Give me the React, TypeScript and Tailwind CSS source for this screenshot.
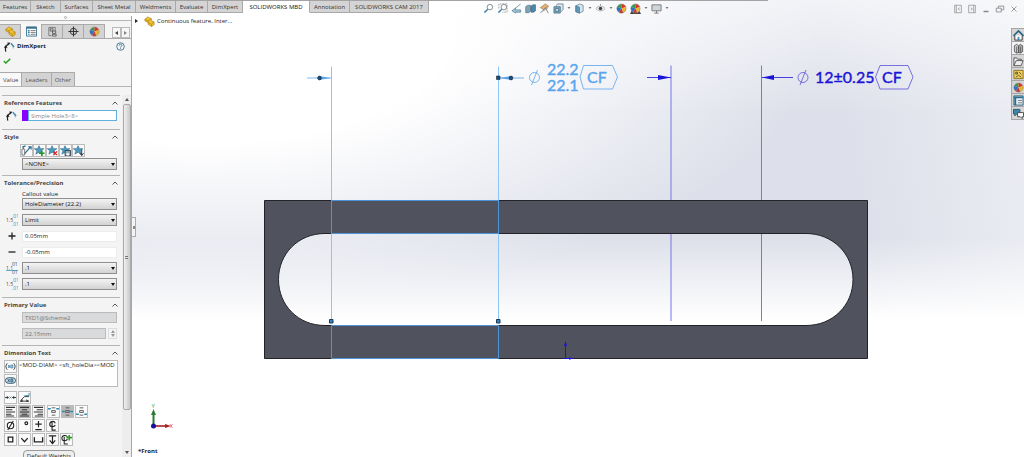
import { useState, type ReactNode } from 'react'
import { clsx } from 'clsx'

type IconProps = { children: ReactNode; className?: string }

function Icon({ children, className = 'size-[11px]' }: IconProps) {
  return (
    <svg viewBox="0 0 12 12" className={clsx('shrink-0', className)} fill="none" stroke="#555" strokeWidth="1" aria-hidden="true">
      {children}
    </svg>
  )
}

/* ---------- shared glyphs ---------- */

const PartGlyph = () => (
  <g stroke="#a87a10" strokeWidth=".7" strokeLinejoin="round">
    <path d="M1 3.5 4 1l4 2v2l3 1.5v3L8 11.5 4.5 9V7L1 5.5Z" fill="#f4c430" />
    <path d="M1 3.5 4.5 5.2 8 3M4.5 5.2V7L8 9l3-2.5M8 9v2.5" />
  </g>
)

const Ball = () => (
  <g stroke="none">
    <circle cx="6" cy="6" r="5" fill="#eee" />
    <path d="M6 6V1a5 5 0 0 0-4.6 3Z" fill="#3b9a3f" />
    <path d="M6 6V1a5 5 0 0 1 4.7 3.3Z" fill="#d8342c" />
    <path d="M6 6 10.7 4.3A5 5 0 0 1 8 10.6Z" fill="#e7b92e" />
    <path d="M6 6 1.4 4A5 5 0 0 0 3 10Z" fill="#2f6fc4" />
    <path d="M6 6 8 10.6A5 5 0 0 1 3 10Z" fill="#c33a36" />
    <circle cx="6" cy="6" r="5" stroke="#777" strokeWidth=".5" />
  </g>
)

const DimXpertGlyph = () => (
  <>
    <path d="M2 11.500C1 8 2 5 4.500 3.500" stroke="#222" strokeWidth="1.300" />
    <path d="m0 7.500 1.500-3L4 7ZM3.500 1.500 7 2 5 5Z" fill="#222" stroke="none" />
    <path d="M7.500 2.500 11 6.500" stroke="#3d8fb5" strokeWidth="1.600" />
    <path d="M10 5v4" stroke="#3d8fb5" strokeDasharray="1 1" />
  </>
)

const StarGlyph = () => (
  <path d="M5.500.800 7 4h3.800L7.800 6.300 9 10 5.500 7.800 2 10l1.200-3.700L.300 4H4Z" fill="#4d9cc0" stroke="#24617f" strokeWidth=".6" />
)

const Lens = ({ color = '#7d8791' }) => (
  <>
    <circle cx="7.500" cy="4.500" r="3" stroke={color} />
    <path d="M5.200 6.800 1.500 10.500" stroke="#4b86ad" strokeWidth="1.600" />
  </>
)

/* ---------- ribbon ---------- */

const TABS = [
  { label: 'Features', width: 'w-[31px]' },
  { label: 'Sketch', width: 'w-[30px]' },
  { label: 'Surfaces', width: 'w-[32px]' },
  { label: 'Sheet Metal', width: 'w-[43px]' },
  { label: 'Weldments', width: 'w-[40px]' },
  { label: 'Evaluate', width: 'w-[32px]' },
  { label: 'DimXpert', width: 'w-[35px]' },
  { label: 'SOLIDWORKS MBD', width: 'w-[67px]' },
  { label: 'Annotation', width: 'w-[40px]' },
  { label: 'SOLIDWORKS CAM 2017', width: 'w-[79px]' },
]

const VIEW_TOOLS: { name: string; menu?: boolean; art: ReactNode }[] = [
  { name: 'Zoom to fit', art: <Lens /> },
  { name: 'Zoom to area', art: <><Lens /><path d="M2 6V1h9v9H6" stroke="#888" strokeDasharray="2 1" strokeWidth=".8" /></> },
  { name: 'Previous view', art: <path d="M10.500 1 4.500 6M1 8.500 5 5.500v2h5.500V10H5v1Z" fill="#9fc4d6" stroke="#55809a" strokeWidth=".8" /> },
  {
    name: 'Section view',
    art: (
      <g stroke="#48697c" strokeWidth=".7">
        <path d="M.8 4 3 2.500h3V9L4 10.500H.8Z" fill="#7da6bb" />
        <path d="M6.500 3.500 8.500 2h3v6.500L9.500 10h-3Z" fill="#4b86ad" />
      </g>
    ),
  },
  {
    name: 'Dynamic annotation views',
    art: (
      <>
        <path d="M1.500 5 7 1l3.500 2.500L5 7Z" fill="#e3b27a" stroke="#9c7040" strokeWidth=".7" />
        <path d="M1.500 11 7 5l3 6M4 9l6-4" stroke="#888" />
      </>
    ),
  },
  {
    name: 'View orientation',
    menu: true,
    art: (
      <g stroke="#4f7285" strokeWidth=".8">
        <path d="M3 3.500 5 1h6v6L9 9.500" fill="#e2e8ec" />
        <path d="M1 4h7v7H1Z" fill="#6fa3bb" />
        <path d="M3 6h3v3H3Z" fill="#d7e6ee" />
      </g>
    ),
  },
  {
    name: 'Display style',
    menu: true,
    art: (
      <g stroke="#4f7285" strokeWidth=".7" strokeLinejoin="round">
        <path d="M2 3 6.500 1 10 2.500v6.500L6 11 2 9.500Z" fill="#d9e6ee" />
        <path d="M2 3l4 1.500V11L2 9.500Z" fill="#5b9abc" />
      </g>
    ),
  },
  {
    name: 'Hide or show items',
    menu: true,
    art: (
      <>
        <path d="M1 6c3-3.500 7-3.500 10 0-3 3.500-7 3.500-10 0Z" stroke="#999" strokeWidth=".8" />
        <circle cx="6" cy="6" r="2" fill="#444" stroke="none" />
        <path d="M6 1v2" stroke="#999" />
      </>
    ),
  },
  { name: 'Edit appearance', art: <Ball /> },
  { name: 'Apply scene', menu: true, art: <><path d="M0 12 2 8h8l2 4Z" fill="#444" stroke="none" /><Ball /></> },
  {
    name: 'View settings',
    menu: true,
    art: (
      <>
        <path d="M1 2h10v6.500H1Z" fill="#cfd6db" stroke="#777" />
        <path d="M6 8.500V11M3.500 11h5" stroke="#777" />
      </>
    ),
  },
]

function Header() {
  const [active, setActive] = useState('SOLIDWORKS MBD')
  return (
    <header className="h-4 shrink-0">
      <div className="h-px w-3/4 bg-[#a3a3a3]" />
      <div className="flex items-start">
        <nav className="flex h-3 shrink-0">
          {TABS.map(tab => (
            <button
              key={tab.label}
              onClick={() => setActive(tab.label)}
              className={clsx(
                'shrink-0 whitespace-nowrap border-b border-r border-[#a9a9a9] text-center',
                tab.width,
                active === tab.label ? 'border-b-transparent bg-white/60 text-[#111]' : 'bg-[#d4d4d4] text-[#333]'
              )}
            >
              {tab.label}
            </button>
          ))}
        </nav>
        <div className="ml-[54px] mt-0.5 flex shrink-0 gap-[3px]">
          {VIEW_TOOLS.map(tool => (
            <button key={tool.name} aria-label={tool.name} className="flex items-center gap-[3px]">
              <Icon>{tool.art}</Icon>
              {tool.menu && (
                <svg viewBox="0 0 4 3" className="h-[3px] w-1" aria-hidden="true">
                  <path d="M.5 0h3L2 2Z" fill="#777" />
                </svg>
              )}
            </button>
          ))}
        </div>
        <div className="ml-auto mr-[5px] mt-[3px] flex gap-1">
          <button aria-label="Collapse left"><Icon className="size-[10px]"><path d="M2 1.500h8v9H2ZM4 1.500v9M8 4.500 6 6l2 1.500" stroke="#999" /></Icon></button>
          <button aria-label="Collapse right"><Icon className="size-[10px]"><path d="M2 1.500h8v9H2ZM8 1.500v9M4.500 4.500l2 1.500-2 1.500" stroke="#999" /></Icon></button>
          <button aria-label="Minimize"><Icon className="size-[10px]"><path d="M3 9h6" stroke="#888" strokeWidth="1.800" /></Icon></button>
          <button aria-label="Restore"><Icon className="size-[10px]"><path d="M1.500 5h6v4.500h-6ZM4 5V2.500h6.500V7h-3" stroke="#888" /></Icon></button>
          <button aria-label="Close"><Icon className="size-[10px]"><path d="m3 3 6 6M9 3 3 9" stroke="#888" /></Icon></button>
        </div>
      </div>
    </header>
  )
}

/* ---------- property panel ---------- */

function Section({ title, className, children }: { title: string; className?: string; children: ReactNode }) {
  return (
    <section className={clsx('border-t border-[#b5b5b5] px-0.5', className)}>
      <h2 className="flex h-[14px] items-center justify-between font-bold text-[#444]">
        {title}
        <svg viewBox="0 0 6 4" className="h-1 w-[6px]" fill="none" stroke="#555" aria-hidden="true">
          <path d="M.5 3.500 3 1l2.500 2.500" />
        </svg>
      </h2>
      {children}
    </section>
  )
}

function Row({ icon, children }: { icon?: ReactNode; children: ReactNode }) {
  return (
    <div className="flex items-center">
      <div className="flex w-[18px] shrink-0 pl-0.5">{icon}</div>
      <div className="mr-px flex min-w-0 flex-1">{children}</div>
    </div>
  )
}

function Select({ label, value }: { label: string; value: string }) {
  return (
    <div className="relative w-full">
      <select
        aria-label={label}
        defaultValue={value}
        className="block h-3 w-full appearance-none border border-[#8f8f8f] bg-linear-to-b from-[#f4f4f4] to-[#d2d2d2] px-0.5 text-[#111]"
      >
        <option>{value}</option>
      </select>
      <svg viewBox="0 0 4 3" className="pointer-events-none absolute right-0.5 top-[5px] h-[3px] w-1" aria-hidden="true">
        <path d="M0 0h4L2 3Z" fill="#111" />
      </svg>
    </div>
  )
}

function ToolButton({ name, on, children }: { name: string; on?: boolean; children: ReactNode }) {
  return (
    <button
      aria-label={name}
      className={clsx('flex size-[13px] shrink-0 items-center justify-center border border-[#bcbcbc]', on ? 'bg-[#b9b9b9]' : 'bg-[#fafafa]')}
    >
      <Icon>{children}</Icon>
    </button>
  )
}

// stacked tolerance numerals: nominal at left, limits above and below
function ToleranceIcon({ nominal, limit, mid }: { nominal: string; limit: string; mid?: boolean }) {
  return (
    <svg viewBox="0 0 12 12" className="size-3" aria-hidden="true" fontSize="5" fontFamily="Open Sans, sans-serif">
      <text x="0" y="8" fill="#444">{nominal}</text>
      <text x="6" y="4" fill={mid ? '#444' : '#2f8aad'}>{limit}</text>
      <text x="6" y="12" fill={mid ? '#444' : '#2f8aad'}>{limit}</text>
      {mid && <path d="M0 8.500h12" stroke="#2f8aad" strokeWidth=".7" />}
    </svg>
  )
}

const PANEL_TABS: { name: string; art: ReactNode }[] = [
  { name: 'Feature tree', art: <PartGlyph /> },
  {
    name: 'Properties',
    art: (
      <>
        <path d="M.5 1h11v10H.5Z" fill="#fff" stroke="#39718f" />
        <path d="M.5 2h11" stroke="#39718f" strokeWidth="2" />
        <path d="M2 5h2M2 7h2M2 9h2" stroke="#2f7fa8" strokeWidth="1.200" />
        <path d="M5 5h5.500M5 7h5.500M5 9h5.500" stroke="#555" strokeWidth=".8" />
      </>
    ),
  },
  {
    name: 'Configurations',
    art: (
      <>
        <path d="M2 1.500h7v4M2 1.500v9h3" stroke="#777" />
        <path d="M3.500 3h3v2.500h-3ZM6 5.500h3.500V8H6ZM6 9h4v2H6Z" stroke="#444" fill="#ddd" strokeWidth=".8" />
      </>
    ),
  },
  {
    name: 'DimXpert manager',
    art: <><circle cx="6" cy="6" r="3.500" stroke="#333" /><path d="M6 .5v11M.5 6h11" stroke="#333" strokeWidth="1.200" /></>,
  },
  { name: 'Appearances', art: <Ball /> },
]

const STYLE_BUTTONS: { name: string; art: ReactNode }[] = [
  { name: 'Apply default', art: <><path d="M1 4.500h3V11H1Z" stroke="#777" /><path d="M4 9.500 10.500 2M3 4 2 2l3-1M8 2h3v3" stroke="#286d90" strokeWidth="1.300" /></> },
  { name: 'Add style', art: <><StarGlyph /><path d="M8.500 6v6M5.500 9h6" stroke="#1f9a1f" strokeWidth="1.800" /></> },
  { name: 'Delete style', art: <><StarGlyph /><path d="m7 7 4 4M11 7l-4 4" stroke="#d22" strokeWidth="1.400" /></> },
  { name: 'Save style', art: <><StarGlyph /><path d="M5.500 6h6v5.500h-6Z" fill="#8aa9b9" stroke="#345" /><path d="M7 9h3v2.500H7Z" fill="#fff" stroke="none" /></> },
  { name: 'Load style', art: <><StarGlyph /><path d="M9.500 5v6M7.500 9l2 2.500 2-2.500" stroke="#222" /></> },
]

const lines = (d: string) => <path d={d} stroke="#333" strokeWidth="1.100" />

const TEXT_TOOLS: { name: string; on?: boolean; gap?: boolean; art: ReactNode }[][] = [
  [
    { name: 'Center dimension', art: <><path d="M0 6h4M8 6h4" stroke="#333" /><path d="m2 4 2 2-2 2M10 4 8 6l2 2" fill="#333" stroke="none" /><path d="m5 5 2 2M7 5 5 7" stroke="#2f8aad" /></> },
    { name: 'Offset text', art: <><path d="M1 10h10M2 9 6 5h5" stroke="#333" /><path d="M6 4h5V1" stroke="#2f8aad" /><path d="m1 10 3-2v3ZM11 10 8 8v3Z" fill="#333" stroke="none" /></> },
  ],
  [
    { name: 'Align left', art: lines('M1 1.500h10M1 4h7M1 6.500h10M1 9h6M1 11h9') },
    { name: 'Align center', on: true, art: lines('M1 1.500h10M3 4h6M1 6.500h10M3 9h6M1 11h10') },
    { name: 'Align right', art: lines('M1 1.500h10M4 4h7M1 6.500h10M5 9h6M2 11h9') },
    { name: 'Top justify', gap: true, art: <><path d="M4 2h4M4 5h4v2H4ZM4 10h4" stroke="#555" /><path d="M0 3h3M9 3h3" stroke="#2f8aad" strokeWidth="1.500" /></> },
    { name: 'Middle justify', on: true, art: <><path d="M4 2h4M4 5h4v2H4ZM4 10h4" stroke="#555" /><path d="M0 6h3M9 6h3" stroke="#2f8aad" strokeWidth="1.500" /></> },
    { name: 'Bottom justify', art: <><path d="M4 2h4M4 5h4v2H4ZM4 10h4" stroke="#555" /><path d="M0 9h3M9 9h3" stroke="#2f8aad" strokeWidth="1.500" /></> },
  ],
  [
    { name: 'Diameter', art: <><circle cx="6" cy="6" r="3.500" stroke="#222" strokeWidth="1.200" /><path d="M3 11 9 1" stroke="#222" strokeWidth="1.200" /></> },
    { name: 'Degree', art: <circle cx="8" cy="3.500" r="1.500" stroke="#222" strokeWidth="1.200" /> },
    { name: 'Plus or minus', art: <path d="M6 1v7M2.500 4.500h7M2.500 10.500h7" stroke="#222" strokeWidth="1.300" /> },
    { name: 'Centerline', art: <path d="M9 3.500C8 .500 3 1 3 4.500S8 8 9 5.500M5.500 2v9h4" stroke="#222" strokeWidth="1.200" /> },
  ],
  [
    { name: 'Square', art: <path d="M3.500 3.500h5v5h-5Z" stroke="#222" strokeWidth="1.400" /> },
    { name: 'Countersink', art: <path d="m2.500 4.500 3.500 4 3.500-4" stroke="#222" strokeWidth="1.400" /> },
    { name: 'Counterbore', art: <path d="M1.500 3.500v5h9v-5" stroke="#222" strokeWidth="1.400" /> },
    { name: 'Depth', art: <path d="M2 2h8M6 2v8M3 7l3 3.500L9 7" stroke="#222" strokeWidth="1.300" /> },
    { name: 'More symbols', art: <><path d="M7 3.500C6 .500 1 1 1 4.500S6 8 7 5.500M3.500 3v8h4" stroke="#222" strokeWidth="1.100" /><path d="M9 1v6M6 4h6" stroke="#2ca01c" strokeWidth="1.800" /></> },
  ],
]

const inputBox = 'block h-[11px] w-full min-w-0 border px-0.5 outline-none'

function PropertyPanel() {
  const [page, setPage] = useState('Value')
  return (
    <aside className="flex w-[132px] shrink-0 flex-col border-r border-[#a8a8a8] bg-[#f4f4f4]">
      <div className="flex h-[5px] shrink-0 justify-center border-b border-[#b5b5b5] bg-[#fafafa]">
        <span className="size-[3px] rounded-full border border-[#aaa]" />
      </div>
      <div className="mt-[3px] flex h-[15px] shrink-0">
        {PANEL_TABS.map((tab, i) => (
          <button
            key={tab.name}
            aria-label={tab.name}
            className={clsx(
              'flex w-[21px] items-center justify-center border-r border-[#aaa]',
              i === 1 ? 'bg-[#f8f8f8]' : 'border-b border-t bg-[#d3d3d3]'
            )}
          >
            <Icon>{tab.art}</Icon>
          </button>
        ))}
        <div className="flex flex-1 items-end justify-end border-b border-[#aaa] pr-px">
          <button aria-label="Previous tabs" className="flex h-[11px] w-[9px] items-center justify-center border border-[#bbb] bg-[#f6f6f6]">
            <svg viewBox="0 0 3 4" className="h-1 w-[3px]" aria-hidden="true"><path d="M3 0v4L0 2Z" fill="#444" /></svg>
          </button>
          <button aria-label="Next tabs" className="flex h-[11px] w-[9px] items-center justify-center border border-[#bbb] bg-[#f6f6f6]">
            <svg viewBox="0 0 3 4" className="h-1 w-[3px]" aria-hidden="true"><path d="M0 0v4l3-2Z" fill="#888" /></svg>
          </button>
        </div>
      </div>

      <div className="flex h-[14px] shrink-0 items-center gap-0.5 pl-1 pr-[6px]">
        <Icon><DimXpertGlyph /></Icon>
        <h1 className="flex-1 font-bold text-[#222]">DimXpert</h1>
        <button aria-label="Help">
          <svg viewBox="0 0 10 10" className="size-[9px]" fill="none" stroke="#3b6f8d" aria-hidden="true">
            <circle cx="5" cy="5" r="4.200" />
            <path d="M3.500 4c0-2 3-2 3-.2C6.500 5 5 5 5 6.200M5 7v1" />
          </svg>
        </button>
      </div>
      <button aria-label="OK" className="flex h-[15px] shrink-0 items-center pl-[3px]">
        <svg viewBox="0 0 8 6" className="h-[6px] w-2" fill="none" stroke="#35a02c" strokeWidth="1.600" aria-hidden="true">
          <path d="m.800 3 2 2L7.200.800" />
        </svg>
      </button>

      <div className="mt-1 flex h-[15px] shrink-0 border-b border-[#b5b5b5]">
        {['Value', 'Leaders', 'Other'].map(name => (
          <button
            key={name}
            onClick={() => setPage(name)}
            className={clsx(
              'border-r border-t border-[#aaa] px-[3px]',
              page === name ? 'bg-[#f8f8f8] text-[#444]' : 'bg-[#d3d3d3] text-[#555]'
            )}
          >
            {name}
          </button>
        ))}
      </div>

      <div className="mt-2 flex min-h-0 flex-1">
        <div className="min-w-0 flex-1 overflow-hidden px-0.5">
          <Section title="Reference Features" className="pb-2">
            <Row icon={<Icon><DimXpertGlyph /></Icon>}>
              <span className="w-[6px] shrink-0 bg-[#8a00ff]" />
              <input aria-label="Reference feature" defaultValue="Simple Hole3<8>" className={clsx(inputBox, 'border-[#5fb0de] bg-white text-[#888]')} />
            </Row>
          </Section>

          <Section title="Style" className="pb-[5px]">
            <div className="mb-px flex pl-4">
              {STYLE_BUTTONS.map(b => <ToolButton key={b.name} name={b.name}>{b.art}</ToolButton>)}
            </div>
            <Row><Select label="Style" value="<NONE>" /></Row>
          </Section>

          <Section title="Tolerance/Precision" className="pb-[7px]">
            <p className="h-2 pl-[18px] leading-2 text-[#222]">Callout value</p>
            <div className="flex flex-col gap-1">
              <Row><Select label="Callout value" value="HoleDiameter (22.2)" /></Row>
              <Row icon={<ToleranceIcon nominal="1.5" limit=".01" />}><Select label="Tolerance type" value="Limit" /></Row>
              <Row icon={<Icon className="size-3"><path d="M6 2.500v7M2.500 6h7" stroke="#222" strokeWidth="1.300" /></Icon>}>
                <input aria-label="Maximum variation" defaultValue="0.05mm" className={clsx(inputBox, 'border-[#ececec] bg-white text-[#222]')} />
              </Row>
              <Row icon={<Icon className="size-3"><path d="M2.500 6h7" stroke="#222" strokeWidth="1.300" /></Icon>}>
                <input aria-label="Minimum variation" defaultValue="-0.05mm" className={clsx(inputBox, 'border-[#ececec] bg-white text-[#222]')} />
              </Row>
              <Row icon={<ToleranceIcon nominal="1.1" limit="01" mid />}><Select label="Unit precision" value=".1" /></Row>
              <Row icon={<ToleranceIcon nominal="1.5" limit=".01" />}><Select label="Tolerance precision" value=".1" /></Row>
            </div>
          </Section>

          <Section title="Primary Value" className="pb-[6px]">
            <div className="flex flex-col gap-[5px]">
              <Row>
                <input aria-label="Dimension name" readOnly defaultValue="TXD1@Scheme2" className={clsx(inputBox, 'border-[#bbb] bg-[#d8dadb] text-[#777]')} />
              </Row>
              <Row>
                <input aria-label="Dimension value" readOnly defaultValue="22.15mm" className={clsx(inputBox, 'border-[#bbb] bg-[#d8dadb] text-[#777]')} />
                <div className="ml-0.5 flex w-[9px] shrink-0 flex-col items-center justify-around border border-[#ddd]">
                  <svg viewBox="0 0 4 3" className="h-[3px] w-1" aria-hidden="true"><path d="M0 3h4L2 0Z" fill="#999" /></svg>
                  <svg viewBox="0 0 4 3" className="h-[3px] w-1" aria-hidden="true"><path d="M0 0h4L2 3Z" fill="#999" /></svg>
                </div>
              </Row>
            </div>
          </Section>

          <Section title="Dimension Text">
            <div className="flex gap-px">
              <div className="flex flex-col gap-px">
                <ToolButton name="Add parentheses">
                  <path d="M2.500 2.500C.500 4.500.500 7.500 2.500 9.500M9.500 2.500c2 2 2 5 0 7" stroke="#333" />
                  <path d="m3.500 4.500 2 3M5.500 4.500l-2 3M6.500 4.500h2v3h-2Z" stroke="#2f7fa8" />
                </ToolButton>
                <ToolButton name="Inspection dimension">
                  <rect x=".5" y="3" width="11" height="6" rx="3" stroke="#24506a" fill="#cfe3ec" />
                  <path d="m3 4.500 2 3M5 4.500l-2 3M6.500 4.500h2v3h-2Z" stroke="#24506a" />
                </ToolButton>
              </div>
              <textarea
                aria-label="Dimension text"
                wrap="off"
                defaultValue="<MOD-DIAM> <sft_holeDia><MOD"
                className="h-[27px] min-w-0 flex-1 resize-none overflow-hidden whitespace-pre border border-[#bbb] bg-white leading-2 text-[#222] outline-none"
              />
            </div>
            <div className="mt-1 flex flex-col gap-px">
              {TEXT_TOOLS.map((row, i) => (
                <div key={i} className="flex gap-px">
                  {row.map(tool => (
                    <div key={tool.name} className={clsx(tool.gap && 'ml-px')}>
                      <ToolButton name={tool.name} on={tool.on}>{tool.art}</ToolButton>
                    </div>
                  ))}
                </div>
              ))}
            </div>
            <button className="ml-[19px] mt-1 h-3 w-[52px] rounded-sm border border-[#999] bg-[#efefef] text-[#222]">Default Weights</button>
          </Section>
        </div>

        {/* scroll bar */}
        <div className="flex w-[9px] shrink-0 flex-col items-center bg-[#ededed]">
          <svg viewBox="0 0 4 3" className="my-[3px] h-[3px] w-1 shrink-0" aria-hidden="true"><path d="M0 3h4L2 0Z" fill="#555" /></svg>
          <div className="flex w-2 flex-[8] flex-col items-center justify-center gap-px rounded-xs border border-[#aaa] bg-linear-to-r from-[#f0f0f0] to-[#c9c9c9]">
            <span className="h-px w-[3px] bg-[#777]" />
            <span className="h-px w-[3px] bg-[#777]" />
          </div>
          <div className="flex-1" />
          <svg viewBox="0 0 4 3" className="my-[3px] h-[3px] w-1 shrink-0" aria-hidden="true"><path d="M0 0h4L2 3Z" fill="#555" /></svg>
        </div>
      </div>
    </aside>
  )
}

/* ---------- graphics area ---------- */

const SKY = '#5aa5ee'
const BLUE = '#1a14d8'

function PartDrawing() {
  return (
    <svg viewBox="132 16 892 441" className="absolute inset-0 h-full w-full" fill="none" fontFamily="Lato, sans-serif">
      {/* plate with slot */}
      <path
        fillRule="evenodd"
        d="M264.500 200.500H867.500V358.500H264.500ZM325 233.500C298 233.500 278.500 254 278.500 279.500S298 325.500 325 325.500H806C833 325.500 853 305 853 279.500S833 233.500 806 233.500Z"
        fill="#50525d"
        stroke="#222228"
      />
      {/* extension lines of both holes */}
      <g stroke="#7775e8">
        <path d="M671 65.500V200M671 234v87M761.500 65.500V200M761.500 234v87" />
      </g>
      <g stroke="#8fc4f5">
        <path d="M331.500 66.500V321M498.500 66.500V321" />
      </g>
      <g stroke="#4d94dc">
        <path d="M331.500 200.500h167v33h-167ZM331.500 325.500h167v33h-167Z" />
      </g>

      {/* 22.2 / 22.1 callout */}
      <path d="M307 78h24M498 78h26" stroke={SKY} strokeWidth=".8" />
      <path d="m331 78-12-2v4ZM499 78l13-2v4Z" fill={SKY} />
      <g fill="#1e4d78" stroke="#10283f" strokeWidth=".6">
        <circle cx="319.500" cy="78" r="1.900" />
        <circle cx="511" cy="78" r="1.900" />
        <path d="M496.500 76h3.500v3.500h-3.500Z" />
      </g>
      <g fill="#3c83bd" stroke="#173a5c">
        <path d="M329.500 319.500h3.500v3.500h-3.500ZM496.500 319.500h3.500v3.500h-3.500Z" />
      </g>
      <g stroke={SKY} strokeWidth=".8">
        <circle cx="534.500" cy="77.500" r="5" />
        <path d="M531.500 85 537.500 70M583.500 65.500h29l5 11.500-5 12h-29l-3.500-12Z" />
      </g>
      <g fill={SKY} stroke={SKY} strokeWidth=".4" fontSize="16">
        <text>
          <tspan x="547" y="75">22.2</tspan>
          <tspan x="547" y="91">22.1</tspan>
        </text>
        <text x="587" y="83">CF</text>
      </g>

      {/* 12 ±0.25 callout */}
      <path d="M647 77.500h24M762 77.500h31" stroke={BLUE} strokeWidth=".8" />
      <path d="m671 77.500-13-2.500v5ZM762 77.500l12-2.500v5Z" fill={BLUE} />
      <g stroke="#5a50dc" strokeWidth=".8">
        <circle cx="803" cy="77.500" r="5" />
        <path d="M800 85 806 70M880 65.500h28l5 11.500-5 12h-28l-4.500-12Z" />
      </g>
      <g fill={BLUE} stroke={BLUE} strokeWidth=".4" fontSize="16">
        <text x="815" y="83">12±0.25</text>
        <text x="882" y="83">CF</text>
      </g>

      {/* origin */}
      <g stroke={BLUE}>
        <path d="M565.500 358V344M564 358.500h9" />
        <path d="m565.500 341-1.500 5h3ZM573 358.500l-4-1.200v2.400Z" fill={BLUE} stroke="none" />
      </g>

      {/* view triad */}
      <path d="M153.500 425V413" stroke="#2c7d32" strokeWidth="2" />
      <path d="m153.500 409-2.500 6h5Z" fill="#2c7d32" />
      <path d="M154 426h13" stroke="#a82020" strokeWidth="1.600" />
      <path d="m171 426-6-2v4Z" fill="#a82020" />
      <circle cx="153.500" cy="426" r="2.500" fill="#1515a0" />
      <g fontSize="6" fontFamily="Open Sans, sans-serif">
        <text x="151.500" y="408" fill="#2ca03a">Y</text>
        <text x="169.500" y="428" fill="#e03030">X</text>
      </g>
    </svg>
  )
}

const TASK_PANE: { name: string; art: ReactNode }[] = [
  { name: 'Resources', art: <><path d="M2 6v5h8V6" fill="#fff" stroke="#333" /><path d="M.5 6.500 6 1l5.500 5.500" stroke="#27627f" strokeWidth="1.800" /><path d="M5 7.500h2V11H5Z" fill="#4b86ad" stroke="none" /></> },
  {
    name: 'Design library',
    art: (
      <g stroke="#444" strokeWidth=".8" fill="#ccc">
        <path d="M1.500 3 4 1.500 6 3v7.500L4 11 1.500 9.500Z" />
        <path d="M6 3l2-1.500L10.500 3v6.500L8 11l-2-.5Z" fill="#aaa" />
        <path d="M4 4v7M8 4v7" />
      </g>
    ),
  },
  { name: 'File explorer', art: <path d="M1 10.500V2h3l1 1.500h4V5M1 10.500 3.500 5H11L9 10.500Z" fill="#eee" stroke="#555" /> },
  { name: 'View palette', art: <><path d="M1 1.500h10v9H1Z" fill="#f0cf5c" stroke="#8a6f22" /><path d="M3 3.500h2v2H3ZM7 3.500 9 6M3 9l3-2 3 2" stroke="#59512f" /></> },
  { name: 'Appearances and scenes', art: <Ball /> },
  { name: 'Custom properties', art: <><path d="M1 1h10v10H1Z" fill="#e5eef2" stroke="#2a5f79" /><path d="M1 2.500h10M2.500 3v8" stroke="#2a6f8f" strokeWidth="2" /><path d="M5.500 6H10M5.500 8.500H10" stroke="#777" /></> },
  { name: 'Forum', art: <><path d="M.5 1.500h7v5H4l-2 2v-2H.5Z" fill="#3f87a6" stroke="#265468" /><path d="M5 5h6.500v4.500H10v2l-2-2H5Z" fill="#fff" stroke="#444" /></> },
]

function GraphicsArea() {
  return (
    <main className="relative flex min-w-0 flex-1 justify-between">
      <PartDrawing />
      <div className="relative flex flex-col justify-between pb-px">
        <div className="flex h-[10px] items-center pl-[3px]">
          <svg viewBox="0 0 3 4" className="h-1 w-[3px]" aria-hidden="true"><path d="M0 0v4l3-2Z" fill="#222" /></svg>
          <Icon className="ml-[6px] mr-0.5 size-[11px]"><PartGlyph /></Icon>
          <span className="whitespace-nowrap text-[#222]">Continuous feature, Inter...</span>
        </div>
        <button aria-label="Collapse panel" className="flex h-5 w-1 items-center justify-center border border-l-0 border-[#aaa] bg-[#f4f4f4]">
          <span className="h-[3px] w-0.5 bg-[#888]" />
        </button>
        <span className="flex h-7 items-end pl-[6px] font-bold text-[#222]">*Front</span>
      </div>
      <div className="relative mt-3 flex w-[13px] flex-col self-start border-l border-t border-[#a5a5a5]">
        {TASK_PANE.map((item, i) => (
          <button
            key={item.name}
            aria-label={item.name}
            className={clsx('flex h-[13px] items-center justify-center border-b border-[#a5a5a5]', i === 1 ? 'bg-[#f2f2f2]' : 'bg-[#d6d6d6]')}
          >
            <Icon>{item.art}</Icon>
          </button>
        ))}
      </div>
    </main>
  )
}

export default function App() {
  return (
    <div
      className={clsx(
        'flex h-screen flex-col overflow-hidden font-["Open_Sans",sans-serif] text-[6px] leading-[10px]',
        'bg-[linear-gradient(to_bottom,#ffffff99_0%,#ffffff00_25%,#ffffff00_52%,#ffffff_70%),radial-gradient(ellipse_60%_58%_at_20%_8%,#ffffff_40%,#ffffff00_100%),linear-gradient(80deg,#dde0ea_82%,#eceef3_100%)]'
      )}
    >
      <Header />
      <div className="flex min-h-0 flex-1">
        <PropertyPanel />
        <GraphicsArea />
      </div>
    </div>
  )
}
